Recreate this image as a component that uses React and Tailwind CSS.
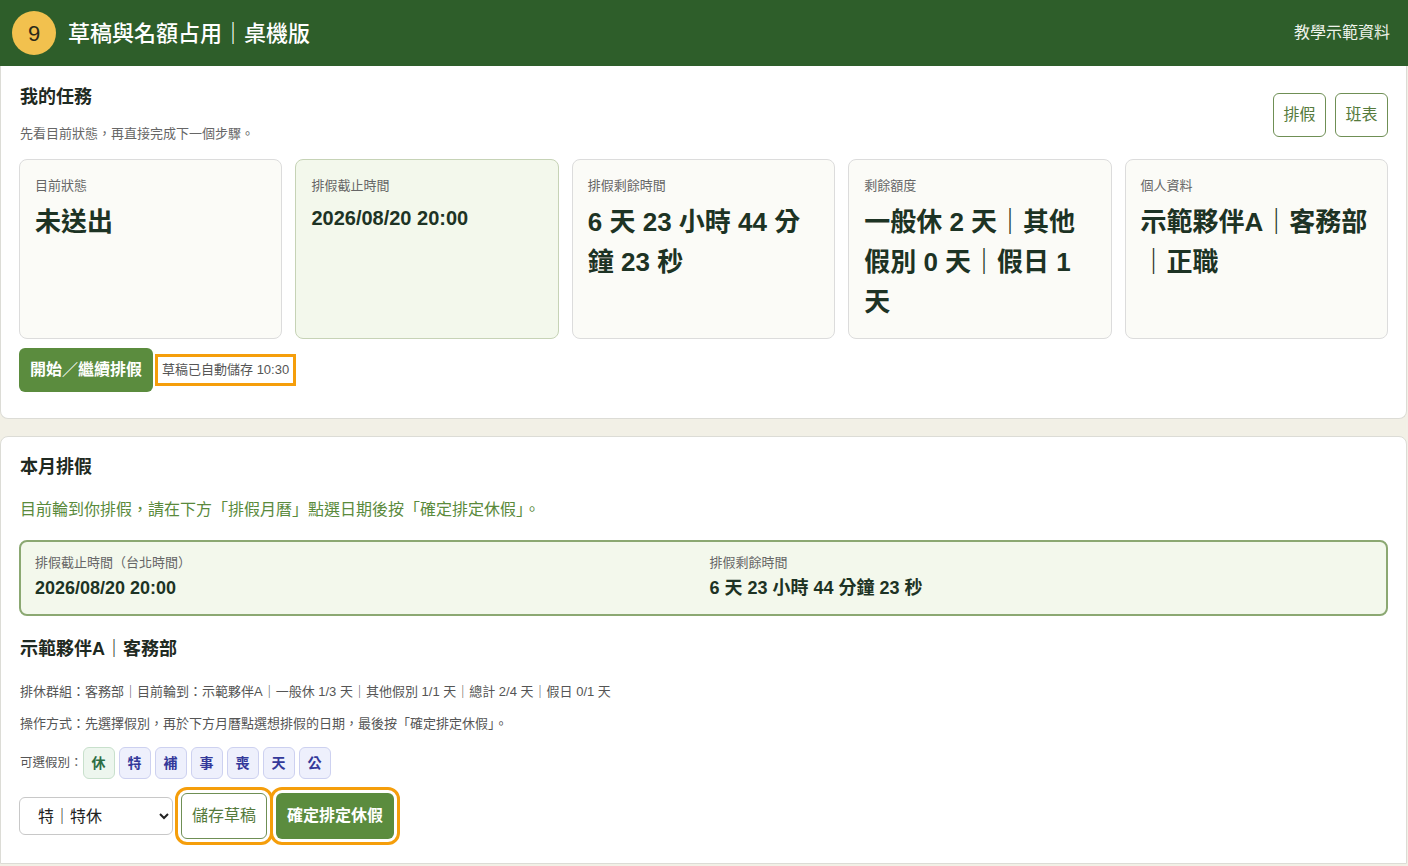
const stats = [
  { label: "目前狀態", value: "未送出" },
  { label: "排假截止時間", value: "2026/08/20 20:00", small: true, active: true },
  { label: "排假剩餘時間", value: "6 天 23 小時 44 分鐘 23 秒" },
  { label: "剩餘額度", value: "一般休 2 天｜其他假別 0 天｜假日 1 天" },
  { label: "個人資料", value: "示範夥伴A｜客務部｜正職" },
];

const chips = ["休", "特", "補", "事", "喪", "天", "公"];

export default function App() {
  return (
    <div className="min-h-screen bg-[#f2f0e6] font-['Liberation_Sans','Noto_Sans_CJK_TC',sans-serif] text-[#1f2a22]">
      <header className="flex h-[66px] items-center justify-between bg-[#2e5e2a] pl-3 pr-[18px]">
        <div className="flex items-center gap-3">
          <div className="flex h-11 w-11 items-center justify-center rounded-full bg-[#f2c14e] text-[22px] text-[#2a2a1a]">
            9
          </div>
          <h1 className="text-[22px] font-medium text-white">草稿與名額占用｜桌機版</h1>
        </div>
        <span className="text-base text-[#eef3ea]">教學示範資料</span>
      </header>

      <section className="mr-px rounded-b-lg border border-t-0 border-[#dcdcd6] bg-white px-[18px] pb-[26px] pt-[18px]">
        <div className="flex items-start justify-between">
          <div className="pl-px">
            <h2 className="text-[18px] font-bold leading-[27px]">我的任務</h2>
            <p className="mt-[13px] text-[13px] leading-5 text-[#666]">先看目前狀態，再直接完成下一個步驟。</p>
          </div>
          <div className="mt-[9px] flex gap-[9px]">
            <button className="h-11 w-[53px] rounded-md border border-[#6f8f55] text-[16px] text-[#557a3c]">排假</button>
            <button className="h-11 w-[53px] rounded-md border border-[#6f8f55] text-[16px] text-[#557a3c]">班表</button>
          </div>
        </div>

        <div className="mt-[15px] grid grid-cols-5 gap-[13px]">
          {stats.map((s) => (
            <div
              key={s.label}
              className={
                s.active
                  ? "h-[180px] rounded-lg border border-[#c6d3b6] bg-[#f3f8ec] px-[15px] pt-[16px]"
                  : "h-[180px] rounded-lg border border-[#dcdcdc] bg-[#fbfbf7] px-[15px] pt-[16px]"
              }
            >
              <div className="text-[13px] leading-5 text-[#666]">{s.label}</div>
              <div
                className={
                  s.small
                    ? "mt-[8px] text-[20px] font-bold leading-7 text-[#1d3324]"
                    : "mt-[6px] text-[26px] font-bold leading-10 text-[#1d3324]"
                }
              >
                {s.value}
              </div>
            </div>
          ))}
        </div>

        <div className="mt-[9px] flex items-center">
          <button className="h-11 rounded-md bg-[#5b8c3e] px-[11px] text-[16px] font-bold text-white">開始／繼續排假</button>
          <span className="ml-[2px] border-[3px] border-[#f59e0b] px-1 py-[3px] text-[13px] leading-5 text-[#555]">
            草稿已自動儲存 10:30
          </span>
        </div>
      </section>

      <section className="mr-px mt-[17px] rounded-t-lg border border-[#dcdcd6] bg-white px-[18px] pb-6 pt-[17px]">
        <div className="pl-px">
          <h2 className="text-[18px] font-bold leading-[27px]">本月排假</h2>
          <p className="mt-[17px] text-[16px] leading-6 text-[#5a8a3c]">
            目前輪到你排假，請在下方「排假月曆」點選日期後按「確定排定休假」。
          </p>
        </div>

        <div className="mt-[18px] grid grid-cols-2 gap-3 rounded-lg border-2 border-[#8ba872] bg-[#f3f8ec] px-[14px] pb-3 pt-[11px]">
          <div>
            <div className="text-[13px] leading-5 text-[#666]">排假截止時間（台北時間）</div>
            <div className="mt-[2px] text-[18px] font-bold leading-[27px] text-[#1d3324]">2026/08/20 20:00</div>
          </div>
          <div>
            <div className="text-[13px] leading-5 text-[#666]">排假剩餘時間</div>
            <div className="mt-[2px] text-[18px] font-bold leading-[27px] text-[#1d3324]">6 天 23 小時 44 分鐘 23 秒</div>
          </div>
        </div>

        <div className="pl-px">
          <h3 className="mt-5 text-[18px] font-bold leading-[27px]">示範夥伴A｜客務部</h3>
          <p className="mt-[19px] text-[13px] leading-5 text-[#555]">
            排休群組：客務部｜目前輪到：示範夥伴A｜一般休 1/3 天｜其他假別 1/1 天｜總計 2/4 天｜假日 0/1 天
          </p>
          <p className="mt-3 text-[13px] leading-5 text-[#555]">
            操作方式：先選擇假別，再於下方月曆點選想排假的日期，最後按「確定排定休假」。
          </p>

          <div className="mt-[13px] flex items-center gap-1">
            <span className="-mr-1 text-[12.5px] text-[#555]">可選假別：</span>
            {chips.map((c, i) => (
              <span
                key={c}
                className={
                  i === 0
                    ? "flex h-8 w-8 items-center justify-center rounded-md border border-[#c8e0cc] bg-[#edf6ee] text-[14px] font-bold text-[#2d6e44]"
                    : "flex h-8 w-8 items-center justify-center rounded-md border border-[#cdd1f0] bg-[#eef0fc] text-[14px] font-bold text-[#34399a]"
                }
              >
                {c}
              </span>
            ))}
          </div>
        </div>

        <div className="mt-[14px] flex items-center gap-2">
          <select
            defaultValue="特"
            className="h-[38px] w-[154px] rounded-md border border-[#c8c8c8] bg-white pl-[14px] pr-2 text-[16px] text-[#222]"
          >
            <option value="休">休｜一般休</option>
            <option value="特">特｜特休</option>
          </select>
          <button className="h-[46px] rounded-md border border-[#6f8f55] bg-white px-[10px] text-[16px] text-[#557a3c] outline-[3px] outline-offset-[3px] outline-[#f59e0b] outline-solid">
            儲存草稿
          </button>
          <button className="ml-px h-[46px] rounded-md bg-[#5b8c3e] px-[11px] text-[16px] font-bold text-white outline-[3px] outline-offset-[3px] outline-[#f59e0b] outline-solid">
            確定排定休假
          </button>
        </div>
      </section>
    </div>
  );
}
